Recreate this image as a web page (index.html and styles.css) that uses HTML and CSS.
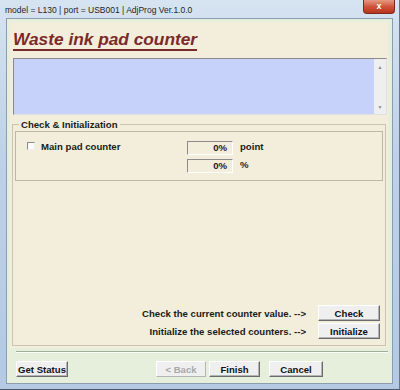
FILE: index.html
```html
<!DOCTYPE html>
<html lang="en">
<head>
<meta charset="UTF-8">
<meta name="viewport" content="width=device-width, initial-scale=1.0">
<title>Waste ink pad counter</title>
<link rel="stylesheet" href="styles.css">
</head>
<body>
<div class="window">
    <div class="titlebar">
        <span class="caption">model = L130 | port = USB001 | AdjProg Ver.1.0.0</span>
        <span class="close-btn">x</span>
    </div>
    <div class="client">
        <div class="panel">
            <h1 class="heading">Waste ink pad counter</h1>
            <div class="listbox">
                <div class="list"></div>
                <div class="scrollbar">
                    <span class="arrow">&#9650;</span>
                    <span class="arrow">&#9660;</span>
                </div>
            </div>
            <fieldset class="group">
                <legend>Check &amp; Initialization</legend>
                <div class="counters">
                    <div class="counter-label">
                        <span class="checkbox"></span>
                        <span>Main pad counter</span>
                    </div>
                    <div class="field">0%</div>
                    <div class="unit">point</div>
                    <div></div>
                    <div class="field">0%</div>
                    <div class="unit">%</div>
                </div>
                <div class="actions">
                    <div class="action-row">
                        <span>Check the current counter value. --&gt;</span>
                        <button class="button wide">Check</button>
                    </div>
                    <div class="action-row">
                        <span>Initialize the selected counters. --&gt;</span>
                        <button class="button wide">Initialize</button>
                    </div>
                </div>
            </fieldset>
        </div>
        <div class="separator"></div>
        <div class="footer">
            <button class="button status">Get Status</button>
            <button class="button back" disabled>&lt; Back</button>
            <button class="button finish">Finish</button>
            <button class="button cancel">Cancel</button>
        </div>
    </div>
</div>
</body>
</html>
```

FILE: styles.css
```css
body {
    margin: 0;
    font-family: "Liberation Sans", Arial, sans-serif;
}
.window {
    width: 400px;
    height: 390px;
    box-sizing: border-box;
    padding: 0 6px 5px 6px;
    background: linear-gradient(to bottom, #d6e3f1, #bed1e8 40%, #b3c9e4);
    border-right: 1px solid #66778a;
    border-bottom: 1px solid #4b5766;
    display: flex;
    flex-direction: column;
}
.titlebar {
    height: 18px;
    display: flex;
    align-items: flex-start;
}
.caption {
    margin-left: -1px;
    padding-top: 1px;
    line-height: 18px;
    font-size: 8.5px;
    color: #1f1f1f;
}
.close-btn {
    margin-left: auto;
    margin-right: -2px;
    width: 32px;
    height: 14px;
    box-sizing: border-box;
    border: 1px solid #7c2a1c;
    border-top: none;
    border-radius: 0 0 4px 4px;
    background: linear-gradient(to bottom, #e59a86, #d0553c 50%, #b8341d);
    color: #fff;
    font-weight: bold;
    font-size: 9px;
    line-height: 12px;
    text-align: center;
}
.client {
    flex: 1;
    border: 1px solid #8d9db0;
    background-color: #e5efdc;
    padding: 3px 4px 0 3px;
    display: flex;
    flex-direction: column;
}
.panel {
    background-color: #f3eedb;
    display: flex;
    flex-direction: column;
}
.heading {
    margin: 7px 0 0 3px;
    font-size: 17.3px;
    line-height: 20px;
    font-weight: bold;
    font-style: italic;
    color: #7a2b29;
    text-decoration: underline;
    text-decoration-thickness: 2px;
    text-underline-offset: 4px;
}
.listbox {
    margin: 9px 1px 0 3px;
    height: 57px;
    box-sizing: border-box;
    border: 1px solid;
    border-color: #8a8a8a #e0e0e0 #e0e0e0 #8a8a8a;
    display: flex;
}
.list {
    flex: 1;
    background-color: #c7d2fb;
}
.scrollbar {
    width: 12px;
    background-color: #efefef;
    display: flex;
    flex-direction: column;
    justify-content: space-between;
    align-items: center;
    padding: 5px 0 4px 0;
}
.arrow {
    font-size: 5px;
    line-height: 6px;
    color: #8a8a8a;
}
.group {
    margin: 4px 2px 2px 2px;
    padding: 1px 5px 6px 1px;
    border: 1px solid #c8c3b2;
    min-width: 0;
}
.group legend {
    margin-left: 5px;
    padding: 0 2px;
    font-size: 9.6px;
    line-height: 11px;
    font-weight: bold;
    color: #1a1a1a;
}
.counters {
    margin-left: 1px;
    width: 368px;
    height: 50px;
    box-sizing: border-box;
    border: 1px solid #bdb8a6;
    padding: 9px 0 0 11px;
    display: grid;
    grid-template-columns: 160px 46px auto;
    grid-auto-rows: 14px;
    row-gap: 4px;
    font-size: 9.6px;
    font-weight: bold;
    color: #1a1a1a;
}
.counter-label {
    display: flex;
    align-items: flex-start;
    gap: 6px;
    line-height: 11px;
}
.checkbox {
    margin-top: 1px;
    width: 8px;
    height: 8px;
    box-sizing: border-box;
    border: 1px solid;
    border-color: #8a8a8a #f0f0f0 #f0f0f0 #8a8a8a;
    background-color: #fbfbfb;
}
.field {
    box-sizing: border-box;
    border: 1px solid;
    border-color: #8c8c8c #ffffff #ffffff #8c8c8c;
    text-align: right;
    padding-right: 5px;
    line-height: 12px;
}
.unit {
    padding-left: 7px;
    line-height: 12px;
}
.actions {
    margin-top: 124px;
    display: flex;
    flex-direction: column;
    align-items: flex-end;
    gap: 2px;
}
.action-row {
    display: flex;
    align-items: center;
    gap: 12px;
    font-size: 9.6px;
    font-weight: bold;
    color: #1a1a1a;
}
.button {
    height: 16px;
    box-sizing: border-box;
    padding: 0;
    border: 1px solid;
    border-color: #ffffff #6a6a6a #6a6a6a #ffffff;
    box-shadow: inset -1px -1px #b4b4b4;
    background-color: #efefef;
    font-family: "Liberation Sans", Arial, sans-serif;
    font-size: 9.6px;
    font-weight: bold;
    color: #111;
}
.button.wide {
    width: 62px;
}
.separator {
    margin: 3px 0 0 6px;
    border-top: 1px solid #a3ad9d;
    border-bottom: 1px solid #fbfdf8;
}
.footer {
    margin-top: 8px;
    padding-left: 6px;
    display: flex;
}
.button.status {
    width: 52px;
}
.button.back {
    margin-left: auto;
    width: 50px;
    color: #a8a8a8;
    border-color: #ffffff #b4b4b4 #b4b4b4 #ffffff;
    box-shadow: none;
}
.button.finish {
    margin-left: 3px;
    width: 51px;
}
.button.cancel {
    margin-left: 9px;
    margin-right: 65px;
    width: 54px;
}
```
